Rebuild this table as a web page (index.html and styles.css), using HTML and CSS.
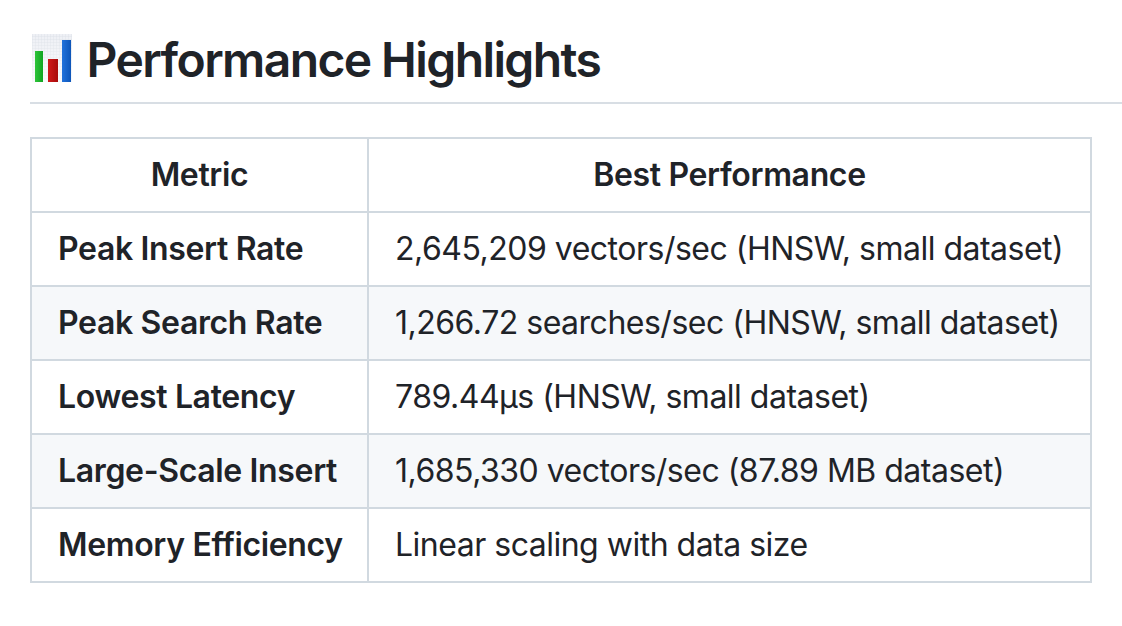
FILE: index.html
```html
<!DOCTYPE html>
<html lang="en">
<head>
<meta charset="utf-8">
<title>Performance Highlights</title>
<link rel="stylesheet" href="styles.css">
</head>
<body>
<div class="page">
  <h2 class="title"><svg class="emoji" width="46" height="50" viewBox="0 0 46 50" aria-hidden="true">
      <defs>
        <pattern id="grid" width="3" height="3" patternUnits="userSpaceOnUse">
          <rect width="3" height="3" fill="#eef0f5"/>
          <path d="M3 0V3M0 3H3" stroke="#d9dde6" stroke-width="0.8"/>
        </pattern>
        <linearGradient id="fade" x1="0" y1="0" x2="0" y2="1">
          <stop offset="0" stop-color="#fff" stop-opacity="0"/>
          <stop offset="1" stop-color="#fff" stop-opacity="0.7"/>
        </linearGradient>
        <linearGradient id="g" x1="0" y1="0" x2="1" y2="0">
          <stop offset="0" stop-color="#2fc43a"/><stop offset="1" stop-color="#10a521"/>
        </linearGradient>
        <linearGradient id="r" x1="0" y1="0" x2="1" y2="0">
          <stop offset="0" stop-color="#d01a1a"/><stop offset="1" stop-color="#a80b0b"/>
        </linearGradient>
        <linearGradient id="b" x1="0" y1="0" x2="1" y2="0">
          <stop offset="0" stop-color="#2172dc"/><stop offset="1" stop-color="#0d55b8"/>
        </linearGradient>
      </defs>
      <rect x="2" y="0" width="40" height="48" fill="url(#grid)"/>
      <rect x="2" y="0" width="40" height="48" fill="url(#fade)"/>
      <rect x="5" y="17" width="8" height="31" fill="url(#g)"/>
      <rect x="18" y="25" width="10" height="23" fill="url(#r)"/>
      <rect x="32" y="6" width="9" height="42" fill="url(#b)"/>
    </svg> Performance Highlights</h2>
  <table class="perf">
    <colgroup>
      <col class="c1">
      <col class="c2">
    </colgroup>
    <thead>
      <tr><th>Metric</th><th>Best Performance</th></tr>
    </thead>
    <tbody>
      <tr><td class="k">Peak Insert Rate</td><td>2,645,209 vectors/sec (HNSW, small dataset)</td></tr>
      <tr><td class="k">Peak Search Rate</td><td>1,266.72 searches/sec (HNSW, small dataset)</td></tr>
      <tr><td class="k">Lowest Latency</td><td>789.44µs (HNSW, small dataset)</td></tr>
      <tr><td class="k">Large-Scale Insert</td><td>1,685,330 vectors/sec (87.89 MB dataset)</td></tr>
      <tr><td class="k">Memory Efficiency</td><td>Linear scaling with data size</td></tr>
    </tbody>
  </table>
</div>
</body>
</html>
```
FILE: styles.css
```css
html, body {
  margin: 0;
  padding: 0;
  background: #ffffff;
}
body {
  font-family: Inter, "Liberation Sans", Arial, sans-serif;
  color: #1f2328;
  font-size: 32px;
  line-height: 48px;
}
.page {
  padding: 30px 0 0 30px;
}
.title {
  margin: 0 0 33px 0;
  padding: 0 0 12px 0;
  font-size: 48px;
  line-height: 60px;
  font-weight: 600;
  letter-spacing: -1.6px;
  border-bottom: 2px solid #d8dee4;
  white-space: nowrap;
}
.emoji {
  vertical-align: -7px;
}
.perf {
  border-collapse: collapse;
  table-layout: fixed;
  width: 1060px;
}
.c1 { width: 337px; }
.c2 { width: 723px; }
.perf th, .perf td {
  border: 2px solid #d1d9e0;
  padding: 12px 26px;
  white-space: nowrap;
  letter-spacing: -0.5px;
}
.perf th {
  font-weight: 600;
  text-align: center;
  letter-spacing: -0.35px;
}
.perf td {
  text-align: left;
}
.perf .k {
  font-weight: 600;
  letter-spacing: -0.35px;
}
.perf tbody tr:nth-child(2n) {
  background: #f6f8fa;
}
```
